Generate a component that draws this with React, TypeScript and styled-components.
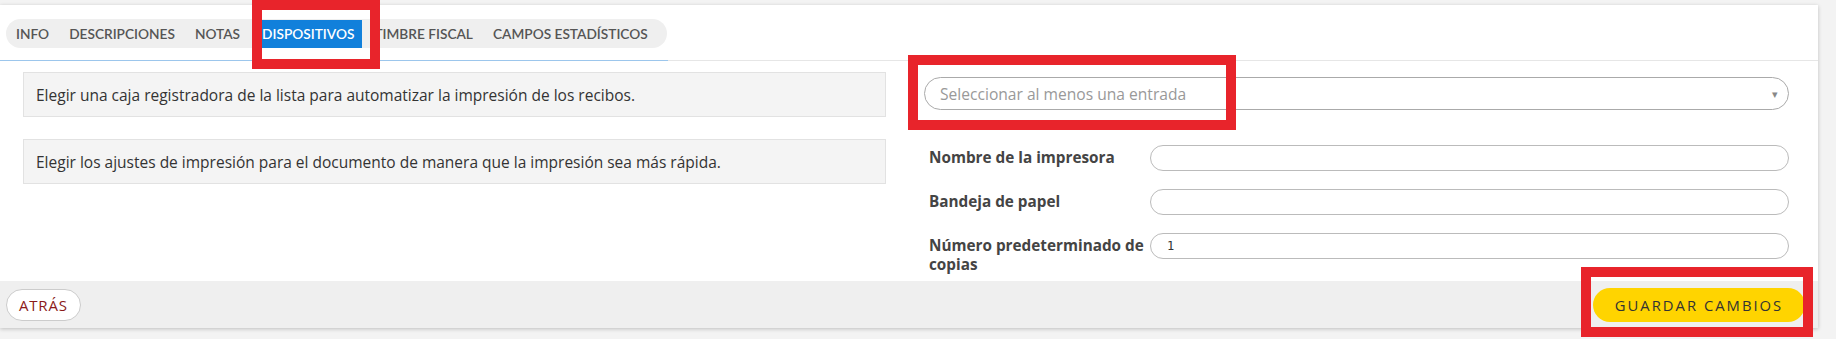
import React from 'react'
import styled, { createGlobalStyle } from 'styled-components'

const tabs = ['Info', 'Descripciones', 'Notas', 'Dispositivos', 'Timbre fiscal', 'Campos estadísticos']

const fields = [
  { label: 'Nombre de la impresora', value: '' },
  { label: 'Bandeja de papel', value: '' },
  { label: 'Número predeterminado de copias', value: '1' },
]

const App = (): JSX.Element => {
  return (
    <Page>
      <GlobalStyle />
      <Card>
        <Header>
          <TabsWrap>
            <Pill>
              {tabs.map((t) => (
                <Tab key={t} active={t === 'Dispositivos'}>{t}</Tab>
              ))}
            </Pill>
          </TabsWrap>
        </Header>
        <Body>
          <Left>
            <Hint>Elegir una caja registradora de la lista para automatizar la impresión de los recibos.</Hint>
            <Hint>Elegir los ajustes de impresión para el documento de manera que la impresión sea más rápida.</Hint>
          </Left>
          <Right>
            <Select>
              <span>Seleccionar al menos una entrada</span>
              <Caret>▾</Caret>
            </Select>
            <Fields>
              {fields.map((f) => (
                <Field key={f.label}>
                  <Label>{f.label}</Label>
                  <Input>{f.value}</Input>
                </Field>
              ))}
            </Fields>
          </Right>
        </Body>
        <Footer>
          <BackButton>Atrás</BackButton>
          <SaveButton>Guardar cambios</SaveButton>
        </Footer>
      </Card>
      <Mark x={252} y={0} w={128} h={69} />
      <Mark x={908} y={55} w={328} h={75} />
      <Mark x={1581} y={267} w={232} h={70} />
    </Page>
  )
}

export default App

const GlobalStyle = createGlobalStyle`
body{
  margin:0;
  background:#f3f3f3;
  font-family:"Open Sans", Lato, sans-serif;
}
`
const Page = styled.div`
position:relative;
width:1836px;
height:339px;
overflow:hidden;
`
const Card = styled.div`
margin-top:5px;
width:1818px;
background:#fff;
box-shadow:0 1px 4px rgba(0,0,0,0.22);
`
const Header = styled.div`
border-bottom:1px solid #e6e6e6;
`
const TabsWrap = styled.div`
width:668px;
padding:14px 0 12px 6px;
box-sizing:border-box;
border-bottom:1px solid #9cc6ec;
margin-bottom:-1px;
`
const Pill = styled.div`
display:inline-flex;
align-items:center;
height:29px;
width:661px;
border-radius:15px;
background:#efefef;
box-sizing:border-box;
`
const Tab = styled.div<{ active?: boolean }>`
height:${({ active }) => active ? '28px' : 'auto'};
display:flex;
align-items:center;
padding:${({ active }) => active ? '0 8px' : '0 10px'};
margin:${({ active }) => active ? '0 2px 0 4px' : '0'};
background:${({ active }) => active ? '#1180db' : 'transparent'};
color:${({ active }) => active ? '#fff' : '#555'};
font-family:Lato, sans-serif;
font-size:13.7px;
font-weight:600;
text-transform:uppercase;
white-space:nowrap;
`
const Body = styled.div`
display:grid;
grid-template-columns:863px 865px;
column-gap:38px;
padding:11px 0 0 23px;
height:220px;
box-sizing:border-box;
`
const Left = styled.div`
display:flex;
flex-direction:column;
gap:22px;
`
const Hint = styled.div`
height:45px;
display:flex;
align-items:center;
padding-left:12px;
background:#f4f4f4;
border:1px solid #e2e2e2;
box-sizing:border-box;
font-size:15.5px;
color:#333;
`
const Right = styled.div`
padding-top:5px;
`
const Select = styled.div`
height:33px;
display:flex;
align-items:center;
justify-content:space-between;
padding:0 10px 0 15px;
border:1px solid #aaa;
border-radius:17px;
box-sizing:border-box;
color:#999;
font-size:15.6px;
`
const Caret = styled.span`
color:#888;
font-size:11px;
`
const Fields = styled.div`
display:flex;
flex-direction:column;
gap:18px;
margin-top:35px;
`
const Field = styled.div`
display:grid;
grid-template-columns:226px 1fr;
align-items:start;
`
const Label = styled.div`
padding:3px 0 0 5px;
font-size:15.3px;
font-weight:700;
color:#444;
line-height:19px;
`
const Input = styled.div`
height:26px;
border:1px solid #bbb;
border-radius:13px;
box-sizing:border-box;
padding-left:16px;
display:flex;
align-items:center;
font-family:"DejaVu Sans Mono", monospace;
font-size:12px;
color:#333;
`
const Footer = styled.div`
height:47px;
display:flex;
align-items:center;
justify-content:space-between;
padding:0 13px 0 6px;
background:#efefef;
`
const BackButton = styled.div`
height:32px;
display:flex;
align-items:center;
padding:0 12px;
background:#fff;
border:1px solid #ccc;
border-radius:16px;
box-sizing:border-box;
color:#8b1a1a;
font-size:15px;
letter-spacing:0.8px;
text-transform:uppercase;
`
const SaveButton = styled.div`
height:34px;
width:212px;
display:flex;
align-items:center;
justify-content:center;
background:#ffd400;
border-radius:17px;
color:#333;
font-size:14.8px;
letter-spacing:2px;
text-transform:uppercase;
`
const Mark = styled.div<{ x: number; y: number; w: number; h: number }>`
position:absolute;
left:${({ x }) => x}px;
top:${({ y }) => y}px;
width:${({ w }) => w}px;
height:${({ h }) => h}px;
border:10px solid #e8242b;
box-sizing:border-box;
pointer-events:none;
`
